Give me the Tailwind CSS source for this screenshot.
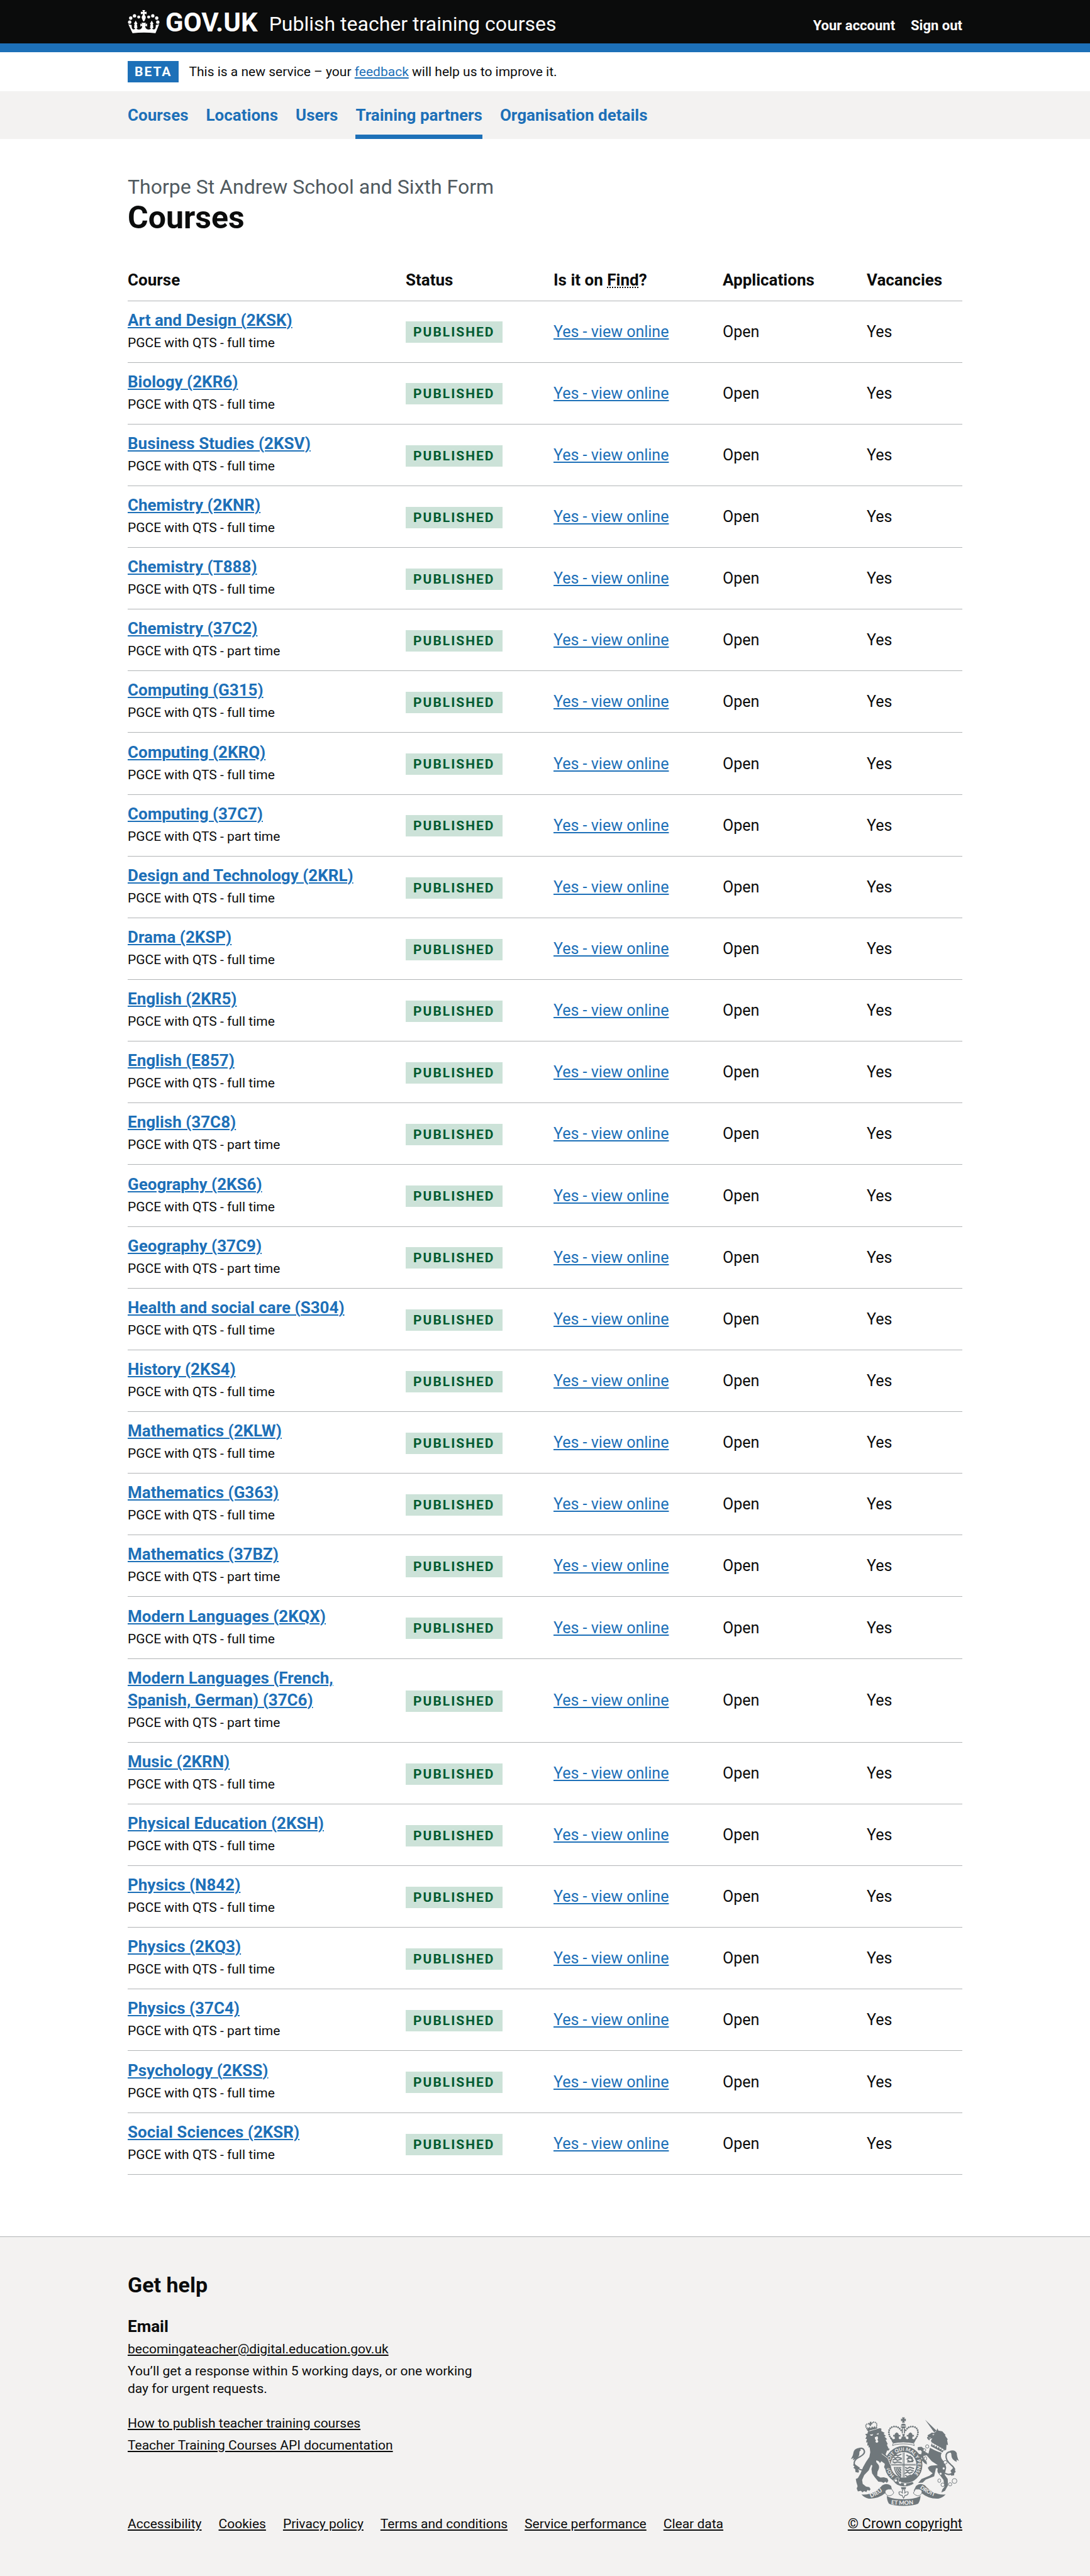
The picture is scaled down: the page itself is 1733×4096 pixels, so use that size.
<!DOCTYPE html>
<html lang="en">
<head>
<meta charset="utf-8">
<meta name="viewport" content="width=device-width, initial-scale=1">
<title>Courses - Publish teacher training courses - GOV.UK</title>
<script src="https://cdn.jsdelivr.net/npm/@tailwindcss/browser@4"></script>
</head>
<body class="flex min-h-screen flex-col bg-white font-[Roboto,Arial,sans-serif] text-[25px] leading-[35px] text-[#0b0c0c]">

<header class="border-b-[14px] border-[#1d70b8] bg-[#0b0c0c] text-white">
  <div class="mx-auto flex h-[69px] w-full max-w-[1327px] items-center">
    <a href="#" class="flex items-center gap-[9px]" aria-label="GOV.UK">
      <svg class="h-[37px] w-[51px]" viewBox="30 30 212 154" fill="#fff" aria-hidden="true">
        <circle cx="43" cy="110" r="11"/><circle cx="50" cy="83" r="11"/><circle cx="75" cy="68" r="11"/><circle cx="103" cy="76" r="10"/>
        <circle cx="169" cy="76" r="10"/><circle cx="196" cy="68" r="11"/><circle cx="222" cy="83" r="11"/><circle cx="229" cy="110" r="11"/>
        <path d="M127 30h18l-4 14 14-4v18l-13-4 2 12c6 5 7 12 4 19l-7 17q-5 5-10 0l-7-17c-3-7-2-14 4-19l2-12-13 4V40l14 4z"/>
        <path d="M34 124l22 5c1 10-1 16 4 24 5 7 17 8 20-3-8 2-11-8-5-12-4-4-2-9 2-9l-5-9 11-20 11 20-5 9c4 0 6 5 2 9 6 4 4 13-3 12 4 12 25 13 34 0 4-5 4-11 1-17l-9 7v-22l12 8-5-12h30l-5 12 12-8v22l-9-7c-3 6-3 12 1 17 9 13 30 12 34 0-7 1-9-8-3-12-4-4-2-9 2-9l-5-9 11-20 11 20-5 9c4 0 6 5 2 9 6 4 3 14-5 12 3 11 15 10 20 3 5-8 3-14 4-24l22-5-24 59q-76-9-152 0z"/>
      </svg>
      <span class="pt-[3px] text-[42px] leading-[42px] font-bold">GOV.UK</span>
    </a>
    <a href="#" class="ml-[18px] pt-[6px] text-[32px] leading-[40px]">Publish teacher training courses</a>
    <nav class="ml-auto flex gap-[25px] pt-[13px] text-[22px] leading-[28px] font-bold" aria-label="Account">
      <a href="#">Your account</a>
      <a href="#">Sign out</a>
    </nav>
  </div>
</header>

<div class="mx-auto flex w-full max-w-[1327px] items-center gap-4 py-[14px] text-[21px] leading-[28px]">
  <strong class="bg-[#1d70b8] px-[11px] py-[3px] tracking-[2px] text-white">BETA</strong>
  <p>This is a new service – your <a href="#" class="text-[#1d70b8] underline decoration-2 underline-offset-2">feedback</a> will help us to improve it.</p>
</div>

<nav class="bg-[#f3f2f1] text-[26px] font-bold text-[#1d70b8]" aria-label="Organisation">
  <ul class="mx-auto flex h-[76px] w-full max-w-[1327px] gap-[28px]">
    <li class="flex items-center"><a href="#">Courses</a></li>
    <li class="flex items-center"><a href="#">Locations</a></li>
    <li class="flex items-center"><a href="#">Users</a></li>
    <li class="flex items-center border-b-[7px] border-[#1d70b8] pt-[7px]"><a href="#" aria-current="page">Training partners</a></li>
    <li class="flex items-center"><a href="#">Organisation details</a></li>
  </ul>
</nav>

<main class="mx-auto flex w-full max-w-[1327px] flex-1 flex-col pt-[55px] pb-[98px]">
  <h1 class="mb-[54px] text-[50px] leading-[56px] font-bold">
    <span class="block text-[32px] leading-[42px] font-normal text-[#505a5f]">Thorpe St Andrew School and Sixth Form</span>
    Courses
  </h1>
  <table class="w-full flex-1 table-fixed border-collapse text-left">
    <colgroup><col class="w-[442px]"><col class="w-[235px]"><col class="w-[269px]"><col class="w-[229px]"><col></colgroup>
    <thead>
      <tr class="h-[50px] border-b border-[#b1b4b6] align-top text-[26px]">
        <th scope="col">Course</th>
        <th scope="col">Status</th>
        <th scope="col">Is it on <abbr title="Find postgraduate teacher training" class="underline decoration-dotted decoration-2 underline-offset-2">Find</abbr>?</th>
        <th scope="col">Applications</th>
        <th scope="col">Vacancies</th>
      </tr>
    </thead>
    <tbody id="courses"></tbody>
  </table>
</main>

<footer class="border-t border-[#b1b4b6] bg-[#f3f2f1] text-[21px] leading-[28px]">
  <div class="mx-auto w-full max-w-[1327px] pt-[55px] pb-[69px]">
    <h2 class="text-[34px] leading-[42px] font-bold">Get help</h2>
    <div class="flex items-end justify-between">
      <div>
        <h3 class="mt-[28px] mb-[4px] text-[26px] leading-[35px] font-bold">Email</h3>
        <ul class="flex max-w-[575px] flex-col gap-[7px]">
          <li><a href="#" class="underline decoration-2 underline-offset-2">becomingateacher@digital.education.gov.uk</a></li>
          <li>You’ll get a response within 5 working days, or one working day for urgent requests.</li>
        </ul>
        <ul class="mt-[27px] flex flex-col gap-[7px]">
          <li><a href="#" class="underline decoration-2 underline-offset-2">How to publish teacher training courses</a></li>
          <li><a href="#" class="underline decoration-2 underline-offset-2">Teacher Training Courses API documentation</a></li>
        </ul>
        <ul class="mt-[97px] flex flex-wrap gap-x-[27px]">
          <li><a href="#" class="underline decoration-2 underline-offset-2">Accessibility</a></li>
          <li><a href="#" class="underline decoration-2 underline-offset-2">Cookies</a></li>
          <li><a href="#" class="underline decoration-2 underline-offset-2">Privacy policy</a></li>
          <li><a href="#" class="underline decoration-2 underline-offset-2">Terms and conditions</a></li>
          <li><a href="#" class="underline decoration-2 underline-offset-2">Service performance</a></li>
          <li><a href="#" class="underline decoration-2 underline-offset-2">Clear data</a></li>
        </ul>
      </div>
      <a href="#" class="flex flex-col items-center gap-[14px] text-[22px] underline decoration-2 underline-offset-2">
        <svg class="h-[142px] w-[173px]" viewBox="100 66 722 592" fill="#6f777b" aria-hidden="true">
          <defs>
            <path id="garter" d="M393 455A93 93 0 1 1 513 455"/>
            <path id="left-scroll" d="M236 602Q290 582 334 540"/>
            <path id="mid-scroll" d="M370 645Q450 654 546 643"/>
            <path id="right-scroll" d="M560 538Q610 580 684 602"/>
          </defs>
          <!-- crown -->
          <path d="M443 69h18l-3 11 10-3v18l-10-3 3 12h-18l3-12-10 3V77l10 3z"/>
          <path d="M436 120a17 15 0 0 1 32 0v4h-32zM434 128h36q-3 14-18 14t-18-14zM441 143h7v32h-7zM456 143h7v32h-7z"/>
          <path d="M369 208C346 175 352 135 389 130C414 128 429 142 440 160M535 208C558 175 552 135 515 130C490 128 475 142 464 160" fill="none" stroke="#6f777b" stroke-width="12" stroke-linecap="round" stroke-dasharray="0 14"/>
          <path d="M362 198l15 6c0 10 10 14 19 6l-4-15-8 2v-12l10 2c-3-7 6-15 14-18 7 3 16 11 13 18l11-2v12l-9-2-2 15c8 6 16 5 18-4l3-12 7 5-5-20h18l-6 20 8-5 4 12c2 9 10 10 18 4l-3-15-9 2v-12l11 2c-3-7 6-15 14-18 7 3 16 11 13 18l10-2v12l-8-2-4 15c9 8 18 4 19-6l15-6-20 40H380z"/>
          <path d="M384 240Q452 225 520 240l4 17q-20-12-72-12t-72 12z" fill="#f3f2f1" stroke="#6f777b" stroke-width="4"/>
          <!-- garter and shield -->
          <circle cx="453" cy="384" r="105" fill="none" stroke="#6f777b" stroke-width="40"/>
          <circle cx="453" cy="384" r="83" fill="#f3f2f1"/>
          <g fill="none" stroke="#6f777b" stroke-width="4"><path d="M450 302v180M457 302v180M371 380h164M371 387h164"/></g>
          <g fill="none" stroke="#6f777b" stroke-width="8" stroke-linecap="round">
            <path d="M392 324l12-6 10 6 22-10M388 334l10 6 16-6 24 6M382 352l16-6 14 8 26-8M382 364l12 6 18-6 26 6"/>
            <path d="M466 402l12 6 16-8 26 8M466 418l16 6 14-8 22 8M464 440l14-8 14 8 18-8M466 454l12 8 22-10M466 472l14-4"/>
            <path d="M474 320l18 10-12 12 22-4 14 16-20 10-16-12M496 326l16 14M480 364l34-2"/>
          </g>
          <path d="M388 398h50v62l-8 10q-36-26-42-72z"/>
          <path d="M398 402q2 32 34 56M408 402q2 26 28 42M419 402q4 20 19 28M430 402l8 12" stroke="#f3f2f1" stroke-width="4" fill="none"/>
          <text fill="#f3f2f1" font-family="Lato, sans-serif" font-weight="700" font-size="32"><textPath href="#garter">HONI SOIT QUI MAL Y PENSE</textPath></text>
          <path d="M384 490q20-28 40-18l-7 22q50 22 95 2l10 12q-30 22-70 20-45-2-68-38z" stroke="#f3f2f1" stroke-width="3"/>
          <circle cx="402" cy="488" r="8" fill="#f3f2f1"/><circle cx="430" cy="502" r="8" fill="#f3f2f1"/><circle cx="463" cy="513" r="8" fill="#f3f2f1"/>
          <!-- lion -->
          <path d="M222 160Q188 122 213 112Q228 106 235 118Q244 98 262 101Q284 106 270 140" fill="none" stroke="#6f777b" stroke-width="9" stroke-linecap="round" stroke-dasharray="0 11"/>
          <path d="M229 98h10l-2 10 8-2v10l-8-2v12h-9l-1-10-6 4-1-10 9-2zM212 134l10 6 6-10 8 12 8-14 8 10 8-12 10 18-52 14z"/>
          <path d="M210 150L276 134L279 142L214 159z"/>
          <path d="M198 180L214 176L216 164L284 144Q296 138 306 144L305 160L328 172L320 178L336 192L326 196L344 214L334 218L348 246L342 250L354 276L362 278L352 290L344 288L334 314L352 338L364 370L367 400L356 412L352 402L344 412L336 398L326 408L324 394L332 380L306 360L296 372L290 362L274 354Q266 362 280 376Q302 396 280 430L278 456L300 468L322 466L346 474L352 490L342 504L332 496L320 504L308 498L286 496L262 466L244 440L240 412L246 388L238 384L222 420L192 452L178 484L182 510L204 528L226 532L234 546L226 556L214 550L206 564L192 558L180 566L170 556L150 560L142 540L148 526L140 500L136 478L150 472L168 440L184 400L204 364L226 332L232 300L228 266L222 270L220 254L212 258L214 234L204 236L210 212L200 212L208 192z"/>
          <path d="M228 184l24-4-6 10q-10 4-18-6M272 180l16-8-2 12zM262 200l18-6 4 14-4 10 6 12q-8 14-20 2l4-12-6-6z" fill="#f3f2f1"/>
          <path d="M182 420Q120 404 126 366Q132 344 164 330Q204 308 190 285Q178 266 150 280" fill="none" stroke="#6f777b" stroke-width="9"/>
          <path d="M164 272Q130 272 122 296Q120 320 104 346L122 338L116 354Q162 340 160 306Q158 292 170 288z"/>
          <path d="M124 376L118 386L128 394L120 404L132 412L134 432L154 436L158 424L150 414L164 404z"/>
          <path d="M308 310L348 340L366 384" fill="none" stroke="#f3f2f1" stroke-width="4"/>
          <!-- unicorn -->
          <path d="M596 84L672 158L656 168z"/>
          <path d="M654 172L668 164L678 142L684 156L710 162L732 186L728 190L746 214L742 220L748 252L738 250L736 284L722 290L706 274L640 236L634 224L644 208L628 212L624 222L612 212L608 202L616 196L612 188Q630 178 640 170z"/>
          <path d="M642 184l16-5-6 9zM614 208l18-7 1 5z" fill="#f3f2f1"/>
          <path d="M640 238L724 284L712 304L632 264z" fill="#f3f2f1"/>
          <path d="M634 260L640 240L648 258L656 248L662 266L672 256L678 274L688 264L694 282L704 274L706 290L722 282L712 302z"/>
          <path d="M628 270Q670 294 706 304Q696 326 706 344Q732 374 736 404L726 450L746 478L748 520L728 556L704 568L710 548L724 530L718 484L690 446Q672 434 680 408L668 406L656 460L600 482L580 502L550 504L572 478L626 456L646 440L624 422L614 404Q622 388 650 388L680 386L640 360L614 330L606 320L584 326L588 346L606 362L608 382L594 374L580 360L568 354L578 342L556 324L552 312L570 314L574 296Q562 280 556 290L546 282L548 266L572 264L592 280L594 296L618 310z"/>
          <path d="M728 440Q762 460 790 428Q796 404 768 384Q728 350 736 316Q744 296 768 298" fill="none" stroke="#6f777b" stroke-width="9"/>
          <path d="M762 290Q794 282 806 306Q806 330 820 358L804 350L806 364Q770 350 770 318Q772 306 760 298z"/>
          <path d="M786 400L796 410L790 420L800 430L790 438L788 454L770 456L762 446L772 438L764 424z"/>
          <g fill="#f3f2f1" stroke="#6f777b" stroke-width="4">
            <circle cx="610" cy="262" r="11"/><circle cx="592" cy="286" r="9"/><ellipse cx="598" cy="342" rx="9" ry="12"/><circle cx="730" cy="367" r="12"/><circle cx="719" cy="408" r="9"/><circle cx="699" cy="443" r="9"/><ellipse cx="690" cy="489" rx="10" ry="12"/><circle cx="713" cy="516" r="12"/><circle cx="762" cy="513" r="11"/><circle cx="791" cy="491" r="16"/>
          </g>
          <!-- scrolls -->
          <path d="M174 580Q250 590 312 520Q344 500 370 524L376 548Q330 544 334 570Q284 612 222 608Q192 602 174 580z"/>
          <path d="M732 580Q656 590 594 520Q562 500 536 524L520 556Q570 548 572 572Q622 612 684 608Q714 602 732 580z"/>
          <path d="M350 545Q324 553 332 571Q342 591 362 589Q384 583 388 567L374 545zM556 545Q582 553 574 571Q564 591 544 589Q524 583 518 571L532 545z" fill="#f3f2f1" stroke="#6f777b" stroke-width="4"/>
          <path d="M342 588Q362 610 452 612Q542 610 566 588Q564 620 550 642Q520 656 452 656Q382 656 356 642Q342 620 342 588z"/>
          <g fill="#f3f2f1" font-family="Lato, sans-serif" font-weight="700" font-size="38">
            <text><textPath href="#left-scroll">DIEU</textPath></text>
            <text><textPath href="#mid-scroll">ET MON</textPath></text>
            <text font-size="36"><textPath href="#right-scroll">DROIT</textPath></text>
          </g>
          <path d="M436 532h34l-4 16-12-8-14 8z"/>
          <path d="M453 540q-14 18-6 34-10-16-24-10-4 16 12 22h8l10 20 10-20h8q16-6 12-22-14-6-24 10 8-16-6-34z" fill="#f3f2f1" stroke="#6f777b" stroke-width="5"/>
        </svg>
        © Crown copyright
      </a>
    </div>
  </div>
</footer>

<script>
  const courses = [
    ["Art and Design (2KSK)", "full"], ["Biology (2KR6)", "full"], ["Business Studies (2KSV)", "full"],
    ["Chemistry (2KNR)", "full"], ["Chemistry (T888)", "full"], ["Chemistry (37C2)", "part"],
    ["Computing (G315)", "full"], ["Computing (2KRQ)", "full"], ["Computing (37C7)", "part"],
    ["Design and Technology (2KRL)", "full"], ["Drama (2KSP)", "full"], ["English (2KR5)", "full"],
    ["English (E857)", "full"], ["English (37C8)", "part"], ["Geography (2KS6)", "full"],
    ["Geography (37C9)", "part"], ["Health and social care (S304)", "full"], ["History (2KS4)", "full"],
    ["Mathematics (2KLW)", "full"], ["Mathematics (G363)", "full"], ["Mathematics (37BZ)", "part"],
    ["Modern Languages (2KQX)", "full"], ["Modern Languages (French, Spanish, German) (37C6)", "part"],
    ["Music (2KRN)", "full"], ["Physical Education (2KSH)", "full"], ["Physics (N842)", "full"],
    ["Physics (2KQ3)", "full"], ["Physics (37C4)", "part"], ["Psychology (2KSS)", "full"],
    ["Social Sciences (2KSR)", "full"],
  ];
  document.getElementById("courses").innerHTML = courses.map(([name, mode]) => `
    <tr class="border-b border-[#b1b4b6]">
      <td class="py-[13px] pr-[28px]">
        <a href="#" class="text-[26px] font-bold text-[#1d70b8] underline decoration-2 underline-offset-2">${name}</a>
        <span class="block text-[21px] leading-[36px]">PGCE with QTS - ${mode} time</span>
      </td>
      <td><strong class="inline-block bg-[#cce2d8] px-[12px] py-[3px] align-middle text-[21px] leading-[28px] tracking-[2px] text-[#005a30]">PUBLISHED</strong></td>
      <td><a href="#" class="text-[#1d70b8] underline decoration-2 underline-offset-2">Yes - view online</a></td>
      <td>Open</td>
      <td>Yes</td>
    </tr>`).join("");
</script>
</body>
</html>
